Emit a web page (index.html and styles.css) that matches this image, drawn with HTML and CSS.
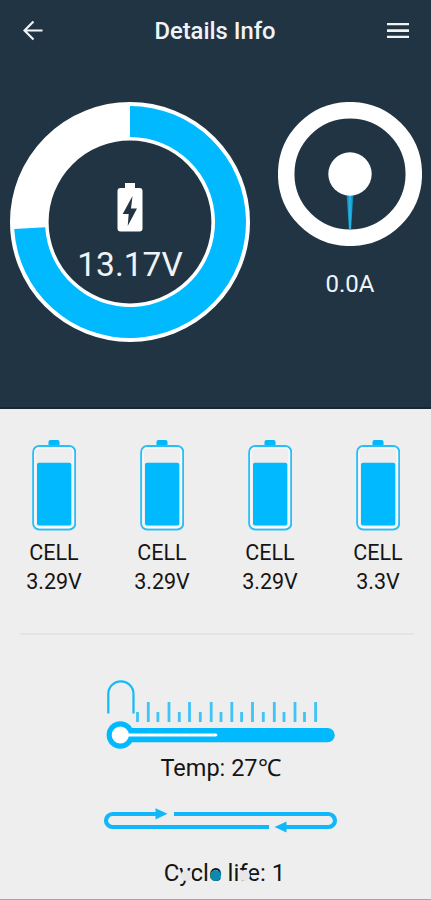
FILE: index.html
```html
<!DOCTYPE html>
<html lang="en">
<head>
<meta charset="utf-8">
<title>Details Info</title>
<link rel="stylesheet" href="styles.css">
</head>
<body>
<svg class="defs" width="0" height="0" aria-hidden="true">
  <symbol id="cell" viewBox="0 0 44 91">
    <path d="M16.5 5V2q0-2 2-2h7q2 0 2 2v3z" fill="#00b7fb"/>
    <rect x="1.200" y="6" width="42" height="83.500" rx="6" fill="none" stroke="#27bff8" stroke-width="2"/>
    <rect x="3" y="8" width="38.300" height="79.500" rx="4" fill="none" stroke="#f6fbfd" stroke-width="1.5"/>
    <rect x="5" y="22.8" width="34.3" height="62.6" rx="2" fill="#00b9ff"/>
  </symbol>
</svg>
<main class="screen">
  <section class="top">
    <header class="bar">
      <svg width="20" height="20" viewBox="0 0 20 20" fill="none" stroke="#f1f4f6" stroke-width="2.200"><path d="M19.5 9.500H1.5M10.5 .5L1.5 9.500l9 9"/></svg>
      <h1>Details Info</h1>
      <svg width="22" height="16" viewBox="0 0 22 16" fill="#f3f3f1"><path d="M0 0h22v2.3H0zM0 6.3h22v2.6H0zM0 12.7h22V15H0z"/></svg>
    </header>
    <div class="gauges">
      <div class="volt">
        <svg class="ring" width="240" height="242" viewBox="0 0 240 242">
          <circle cx="120" cy="121" r="100.7" fill="none" stroke="#fff" stroke-width="38.6"/>
          <path d="M120 5A116 116 0 1 1 4.2 128L35.2 126.2A85 85 0 1 0 120 36z" fill="#00b9ff"/>
        </svg>
        <div class="readout">
          <svg width="26" height="49" viewBox="0 0 26 49"><path d="M8 5V0h10v5h4.500q3 0 3 3v37.500q0 3-3 3H3.500q-3 0-3-3V8q0-3 3-3z" fill="#fff"/><path d="M15.500 13L5.700 31h6l-1 12L20 25.500h-6z" fill="#213443"/></svg>
          <span>13.17V</span>
        </div>
      </div>
      <div class="amp">
        <svg width="144" height="144" viewBox="0 0 144 144">
          <defs><linearGradient id="needle"><stop stop-color="#1675a0"/><stop offset=".5" stop-color="#21bdf2"/><stop offset="1" stop-color="#1675a0"/></linearGradient></defs>
          <circle cx="72" cy="72" r="63.800" fill="none" stroke="#fff" stroke-width="16.500"/>
          <path d="M68.500 92h7L73 127.500h-2z" fill="url(#needle)"/>
          <circle cx="72" cy="72" r="21.700" fill="#fff"/>
        </svg>
        <span>0.0A</span>
      </div>
    </div>
  </section>
  <section class="cells">
    <div class="cell"><svg width="44" height="91"><use href="#cell"/></svg><span>CELL</span><span>3.29V</span></div>
    <div class="cell"><svg width="44" height="91"><use href="#cell"/></svg><span>CELL</span><span>3.29V</span></div>
    <div class="cell"><svg width="44" height="91"><use href="#cell"/></svg><span>CELL</span><span>3.29V</span></div>
    <div class="cell"><svg width="44" height="91"><use href="#cell"/></svg><span>CELL</span><span>3.3V</span></div>
  </section>
  <hr>
  <section class="stats">
    <svg class="thermo" width="232" height="70" viewBox="105 680 232 70" fill="none">
      <path d="M108.300 713.500V694a12.600 12.600 0 0 1 25.200 0v19.500" stroke="#13b9f8" stroke-width="2.200"/>
      <path d="M148.300 702v20M169 702v20M189.500 702v20M211.200 702v20M231.800 702v20M252.500 702v20M274.300 702v20M295 702v20M315.600 702v20M137.500 712v10M157.900 712v10M179.300 712v10M200.300 712v10M221 712v10M241.600 712v10M263.300 712v10M284 712v10M304.500 712v10" stroke="#3fc4f6" stroke-width="2.800"/>
      <rect x="120" y="728" width="214.700" height="14.300" rx="7.150" fill="#00b9ff"/>
      <circle cx="120.300" cy="735" r="13.700" fill="#00b9ff"/>
      <circle cx="120.300" cy="735" r="8.600" fill="#fff"/>
      <path d="M126 733.400h90q3 1.500 0 3h-90z" fill="#fff"/>
    </svg>
    <p class="temp">Temp: 27℃</p>
    <svg class="loop" width="236" height="26" viewBox="103 807 236 26">
      <path d="M157 814H112.500a6.500 6.500 0 0 0 0 13H269M174 814H328.500a6.500 6.500 0 0 1 0 13H284" fill="none" stroke="#10b7fa" stroke-width="4.200"/>
      <path d="M155.500 808.200L167.500 813.800l-12 5.700zM286.500 821.400L274.500 827l12 5.600z" fill="#10b7fa"/>
    </svg>
    <div class="life">
      <p>Cycle life: 1</p>
      <div class="dots"><i></i><i class="on"></i><i></i></div>
    </div>
  </section>
</main>
</body>
</html>
```
FILE: styles.css
```css
* { box-sizing: border-box; }
body { margin: 0; font-family: Roboto, sans-serif; }
h1, p { margin: 0; font-weight: 400; }
svg { display: block; flex-shrink: 0; }
.defs { position: absolute; }
.screen {
  height: 900px;
  display: flex;
  flex-direction: column;
  overflow: hidden;
  background: #eee;
  border-bottom: 1px solid #a5a5a5;
  color: #151515;
}
.top {
  height: 409px;
  flex-shrink: 0;
  background: #213443;
  border-bottom: 2px solid #152738;
  color: #f1f4f6;
}
.bar {
  height: 62px;
  padding: 0 22px 0 23px;
  display: flex;
  align-items: center;
  justify-content: space-between;
}
.bar h1 { font-size: 23.8px; font-weight: 500; line-height: 28px; }
.gauges {
  display: flex;
  justify-content: space-between;
  padding: 39px 9px 0 10px;
}
.volt { display: grid; }
.ring, .readout { grid-area: 1 / 1; }
.readout {
  display: flex;
  flex-direction: column;
  align-items: center;
  padding-top: 82px;
  font-size: 33.5px;
  line-height: 40px;
}
.readout span { margin-top: 13px; }
.amp {
  display: flex;
  flex-direction: column;
  align-items: center;
  padding-top: 1px;
  font-size: 24px;
  line-height: 30px;
}
.amp span { margin-top: 23px; }
.cells {
  display: grid;
  grid-template-columns: repeat(4, 108px);
  margin-top: 31px;
}
.cell {
  display: flex;
  flex-direction: column;
  align-items: center;
  font-size: 21.5px;
  line-height: 29px;
}
.cell svg { margin-bottom: 7px; }
hr {
  width: 394px;
  height: 2px;
  margin: 37px 0 0 20px;
  border: 0;
  background: #e4e4e4;
}
.stats {
  display: flex;
  flex-direction: column;
  align-items: center;
  padding-left: 10px;
  margin-top: 45px;
  font-size: 24px;
  line-height: 30px;
}
.temp { margin-top: 3px; font-size: 23.5px; }
.loop { margin-top: 24px; }
.life { position: relative; margin-top: 25px; padding-left: 8px; }
.dots {
  position: absolute;
  left: 25px;
  top: 12px;
  display: flex;
  gap: 18px;
}
.dots i {
  width: 11px;
  height: 11px;
  border-radius: 50%;
  background: #e7e7e7;
}
.dots .on { background: #078caf; }
```
